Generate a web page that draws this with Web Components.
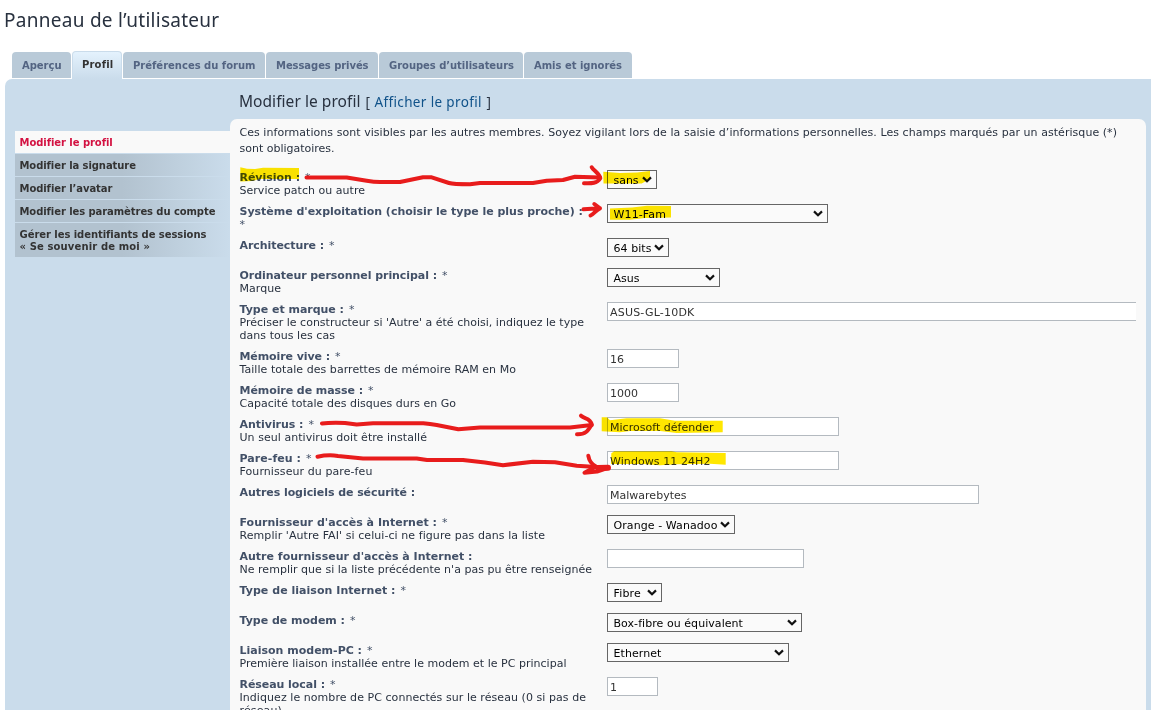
<!DOCTYPE html>
<html lang="fr">
<head>
<meta charset="utf-8">
<title>Panneau de l’utilisateur</title>
<style>
    html, body { margin: 0; height: 710px; overflow: hidden; background: #fff; }
    body { font: 11px/13px "DejaVu Sans", Verdana, sans-serif; color: #28313f; }
</style>
</head>
<body>
<user-panel></user-panel>
<script>
// One line of text, spaced out to the advance given in "w"
class FitText extends HTMLElement {
    connectedCallback() {
        this.attachShadow({ mode: 'open' });
        this.shadowRoot.innerHTML = `
<style>
    :host { display: inline-block; }
    span { white-space: pre; }
</style>
<span><slot></slot></span>`;
        const w = parseFloat(this.getAttribute('w'));
        if (!w)
            return;
        const natural = this.shadowRoot.querySelector('span').getBoundingClientRect().width;
        this.style.letterSpacing = ((w - natural) / this.textContent.length).toFixed(4) + 'px';
    }
}
customElements.define('fit-text', FitText);

class PanelTab extends HTMLElement {
    connectedCallback() {
        this.attachShadow({ mode: 'open' });
        this.shadowRoot.innerHTML = `
<style>
    :host {
        display: block;
        box-sizing: border-box;
        height: 26px;
        padding: 7px 0 0 10px;
        border-radius: 4px 4px 0 0;
        background: #b9cad8;
        color: #536482;
        font-weight: bold;
        font-size: 10px;
    }
    :host([active]) {
        height: 28px;
        padding: 6px 0 0 9px;
        border: 1px solid #cadceb;
        border-bottom: 0;
        background: linear-gradient(#e4f2fd, #cadceb);
        color: #333;
    }
</style>
<slot></slot>`;
    }
}
customElements.define('panel-tab', PanelTab);

class MenuItem extends HTMLElement {
    connectedCallback() {
        this.attachShadow({ mode: 'open' });
        this.shadowRoot.innerHTML = `
<style>
    :host {
        display: block;
        padding: 6px 0 4px 4.5px;
        line-height: 12px;
        font-size: 10px;
        font-weight: bold;
        color: #333;
        background: linear-gradient(to right, #b2c2cf 50%, #cadceb);
    }
    :host([active]) { color: #d31141; background: #f9f9f9; }
    ::slotted(fit-text) { vertical-align: top; }
</style>
<slot></slot>`;
    }
}
customElements.define('menu-item', MenuItem);

class SelectBox extends HTMLElement {
    connectedCallback() {
        this.attachShadow({ mode: 'open' });
        this.shadowRoot.innerHTML = `
<style>
    :host {
        display: flex;
        box-sizing: border-box;
        align-items: flex-start;
        justify-content: space-between;
        height: 19px;
        padding: 3px 3.5px 0 6px;
        border: 1px solid #666;
        background: #fafafa;
        color: #000;
    }
    svg { flex: none; margin-top: 2px; }
</style>
<slot></slot>
<svg width="10" height="7" viewBox="0 0 10 7"><path d="M1 1.400 5 5.200 9 1.400" fill="none" stroke="#111" stroke-width="2.200"/></svg>`;
    }
}
customElements.define('select-box', SelectBox);

class InputBox extends HTMLElement {
    connectedCallback() {
        this.attachShadow({ mode: 'open' });
        this.shadowRoot.innerHTML = `
<style>
    :host {
        display: block;
        box-sizing: border-box;
        height: 19px;
        padding: 3px 0 0 2.5px;
        border: 1px solid #b4bac0;
        background: #fff;
        color: #333;
    }
    :host([open]) { border-right: 0; }
    ::slotted(fit-text) { vertical-align: top; }
</style>
<slot></slot>`;
    }
}
customElements.define('input-box', InputBox);

class FieldRow extends HTMLElement {
    connectedCallback() {
        this.attachShadow({ mode: 'open' });
        this.shadowRoot.innerHTML = `
<style>
    :host {
        display: grid;
        grid-template-columns: 367px 1fr;
        min-height: 22px;
        padding-bottom: 7px;
        align-items: start;
    }
    .text { padding-top: 1px; }
    .label { font-weight: bold; color: #425067; }
    .label, .hint { display: flow-root; }
    ::slotted(*) { vertical-align: top; }
    ::slotted([slot=star]) { margin-left: 5px; font-weight: normal; }
    ::slotted([slot=star][wrap]) { display: block; margin-left: 0; }
    ::slotted([slot=hint]) { display: block; }
    :host([short]) { padding-bottom: 8px; }
</style>
<div class="text">
    <div class="label"><slot name="label"></slot><slot name="star"></slot></div>
    <div class="hint"><slot name="hint"></slot></div>
</div>
<slot></slot>`;
    }
}
customElements.define('field-row', FieldRow);

// Marker and pen strokes drawn over the form
class PenMarks extends HTMLElement {
    connectedCallback() {
        this.attachShadow({ mode: 'open' });
        this.shadowRoot.innerHTML = `
<style>
    :host { position: absolute; left: 0; top: 0; mix-blend-mode: multiply; pointer-events: none; }
    svg { display: block; }
</style>
<svg width="1151" height="710" viewBox="0 0 1151 710">
    <g fill="#ffe700">
        <path d="M240.3 167.3 247 168.7 255 169 263 167.7 299 168V179H260L252 181 240.3 181.5Z"/>
        <path d="M603.3 171.7 620 173 637 172.5 650 171V179L641.7 183.5H603.5Z"/>
        <path d="M610 208.5 632 207.5 647 205.8 671 206V217.5L645 218 630 219.7H610Z"/>
        <path d="M601.7 417.3H607L610 420.3 626.7 418.3H660L675 420.7H722.7V432.3L676.7 433 660 431H630L620 432.3 601.7 431.3Z"/>
        <path d="M611.3 453.3 614.3 451.2H671.7L676.7 452.3 725.7 453V464.7L710 463.7 676.7 464.3 660 465.3 643 464H611Z"/>
    </g>
</svg>`;
    }
}
customElements.define('pen-marks', PenMarks);

class PenArrows extends HTMLElement {
    connectedCallback() {
        this.attachShadow({ mode: 'open' });
        this.shadowRoot.innerHTML = `
<style>
    :host { position: absolute; left: 0; top: 0; pointer-events: none; }
    svg { display: block; }
</style>
<svg width="1151" height="710" viewBox="0 0 1151 710" fill="none" stroke="#e81c1c" stroke-width="4" stroke-linejoin="round" stroke-linecap="round">
    <path d="M306.5 177.5H346.7L366.7 180.7Q374 182 380 182H400L423 177.3H431.7L449 183Q453 184.3 470 184.3L480 183H533L546.7 180.7 563 180 575 176.7 600 177.5"/>
    <path d="M591.7 167.3C594 171 599 173 600.3 178.3 597 183.5 592 183.5 584 183.2"/>
    <path d="M583.5 209.3 600 208.3M594.3 204 600 208.3C596 210 594 214 590.5 215.5"/>
    <path d="M322 423.5Q330 422.5 345 423L356.7 424.5 373 423.3H423.3Q430 424 436.7 425L458.3 429.2 480 427.4H570L591.7 425"/>
    <path d="M581 415.7C585 419.5 590 417.5 591.7 424.5 588 430.5 586 434.6 577 434.3"/>
    <path d="M317.5 456.7Q328 454.5 338 455.9L363 458.5H416.7L427 460H463L485 462.5 503 465.2 533 461.7 555 462.3 576.7 465.7 608 467.7"/>
    <path d="M588.3 455.7C589 460 592 464.5 596 466.5L584.5 472.7 597 471.5 608 467.8"/>
    <path d="M598 468 608 467.8" stroke-width="6"/>
</svg>`;
    }
}
customElements.define('pen-arrows', PenArrows);

// kind, width, value, value advance, label, label advance, star (2: on its own line), hints [text, advance]
const fields = [
    ['select', 50, 'sans', 25, 'Révision :', 60.5, 1, [['Service patch ou autre', 125.5]]],
    ['select', 221, 'W11-Fam', 52.5, "Système d'exploitation (choisir le type le plus proche) :", 343.5, 2, []],
    ['select', 62, '64 bits', 38, 'Architecture :', 84.5, 1, []],
    ['select', 113, 'Asus', 26, 'Ordinateur personnel principal :', 197.5, 1, [['Marque', 41.5]]],
    ['input', 529, 'ASUS-GL-10DK', 84.5, 'Type et marque :', 104.5, 1, [["Préciser le constructeur si 'Autre' a été choisi, indiquez le type", 344.5], ['dans tous les cas', 95.5]]],
    ['input', 72, '16', 14, 'Mémoire vive :', 90.5, 1, [['Taille totale des barrettes de mémoire RAM en Mo', 276.5]]],
    ['input', 72, '1000', 28, 'Mémoire de masse :', 123.5, 1, [['Capacité totale des disques durs en Go', 216.5]]],
    ['input', 232, 'Microsoft défender', 103.5, 'Antivirus :', 64, 1, [['Un seul antivirus doit être installé', 187.5]]],
    ['input', 232, 'Windows 11 24H2', 100.5, 'Pare-feu :', 61.5, 1, [['Fournisseur du pare-feu', 133]]],
    ['input', 372, 'Malwarebytes', 76.5, 'Autres logiciels de sécurité :', 175.5, 0, []],
    ['select', 128, 'Orange - Wanadoo', 104, "Fournisseur d'accès à Internet :", 197.5, 1, [["Remplir 'Autre FAI' si celui-ci ne figure pas dans la liste", 305.5]]],
    ['input', 197, '', 0, "Autre fournisseur d'accès à Internet :", 233, 0, [["Ne remplir que si la liste précédente n'a pas pu être renseignée", 352.5]]],
    ['select', 55, 'Fibre', 27.5, 'Type de liaison Internet :', 156, 1, []],
    ['select', 195, 'Box-fibre ou équivalent', 129.5, 'Type de modem :', 105.5, 1, []],
    ['select', 182, 'Ethernet', 48, 'Liaison modem-PC :', 122.5, 1, [['Première liaison installée entre le modem et le PC principal', 327]]],
    ['input', 51, '1', 7, 'Réseau local :', 85.5, 1, [['Indiquez le nombre de PC connectés sur le réseau (0 si pas de', 346.5], ['réseau)', 42.5]]],
];

function row([kind, width, value, vw, label, lw, star, hints]) {
    return `
<field-row ${hints.length || star === 2 ? '' : 'short'}>
    <fit-text slot="label" w="${lw}">${label}</fit-text>
    ${star ? `<span slot="star" ${star === 2 ? 'wrap' : ''}>*</span>` : ''}
    ${hints.map(([text, w]) => `<fit-text slot="hint" w="${w}">${text}</fit-text>`).join('')}
    <${kind}-box style="width:${width}px" ${width === 529 ? 'open' : ''}>${value ? `<fit-text w="${vw}">${value}</fit-text>` : '<span></span>'}</${kind}-box>
</field-row>`;
}

class UserPanel extends HTMLElement {
    connectedCallback() {
        this.attachShadow({ mode: 'open' });
        this.shadowRoot.innerHTML = `
<style>
    :host { display: flex; flex-direction: column; position: relative; width: 1151px; height: 710px; overflow: hidden; background: #fff; isolation: isolate; }
    h2, h3, p { margin: 0; font-weight: normal; }
    h2, h3 { font-family: "Noto Sans", "Trebuchet MS", sans-serif; }
    h2 { flex: none; height: 42px; padding: 9px 0 0 4px; font-size: 19px; line-height: 23px; color: #28313f; }
    nav { display: flex; flex: none; gap: 1px; height: 28px; padding-left: 12px; align-items: flex-start; }
    nav panel-tab:not([active]) { margin-top: 1px; }
    main { flex: 1; min-height: 0; margin-left: 5px; display: grid; grid-template-columns: 215px 916px; padding: 0 5px 0 10px; background: #cadceb; border-radius: 7px 0 0 0; }
    aside { display: flex; flex-direction: column; gap: 1px; padding-top: 52px; }
    section { display: flex; flex-direction: column; min-height: 0; }
    h3 { display: flex; flex: none; align-items: baseline; height: 28px; padding: 12px 0 0 9px; font-size: 15.5px; line-height: 20px; color: #28313f; }
    h3 a { color: #105289; }
    h3 small { display: flex; gap: 4.5px; margin-left: 5px; font-size: 13.5px; }
    .card { height: 620px; padding: 6px 10px 0 9.5px; border-radius: 7px 7px 0 0; background: #f9f9f9; }
    .card p { line-height: 16px; margin-bottom: 13px; }
    .card p fit-text { display: block; }
</style>
<h2><fit-text w="215.5">Panneau de l’utilisateur</fit-text></h2>
<nav>
    <panel-tab style="width:59px"><fit-text w="39.5">Aperçu</fit-text></panel-tab>
    <panel-tab active style="width:50px"><fit-text w="31">Profil</fit-text></panel-tab>
    <panel-tab style="width:142px"><fit-text w="122.5">Préférences du forum</fit-text></panel-tab>
    <panel-tab style="width:112px"><fit-text w="92.5">Messages privés</fit-text></panel-tab>
    <panel-tab style="width:144px"><fit-text w="125">Groupes d’utilisateurs</fit-text></panel-tab>
    <panel-tab style="width:108px"><fit-text w="88">Amis et ignorés</fit-text></panel-tab>
</nav>
<main>
    <aside>
        <menu-item active><fit-text w="92.500">Modifier le profil</fit-text></menu-item>
        <menu-item><fit-text w="116">Modifier la signature</fit-text></menu-item>
        <menu-item><fit-text w="92.500">Modifier l’avatar</fit-text></menu-item>
        <menu-item><fit-text w="195.500">Modifier les paramètres du compte</fit-text></menu-item>
        <menu-item><fit-text w="186.500">Gérer les identifiants de sessions</fit-text><br><fit-text w="130.500">« Se souvenir de moi »</fit-text></menu-item>
    </aside>
    <section>
        <h3><fit-text w="121.5">Modifier le profil</fit-text><small><span>[</span><a><fit-text w="107.5">Afficher le profil</fit-text></a><span>]</span></small></h3>
        <div class="card">
            <p><fit-text w="877.5">Ces informations sont visibles par les autres membres. Soyez vigilant lors de la saisie d’informations personnelles. Les champs marqués par un astérisque (*)</fit-text><fit-text w="95">sont obligatoires.</fit-text></p>
            ${fields.map(row).join('')}
        </div>
    </section>
</main>
<pen-marks></pen-marks>
<pen-arrows></pen-arrows>`;
    }
}
customElements.define('user-panel', UserPanel);
</script>
</body>
</html>
